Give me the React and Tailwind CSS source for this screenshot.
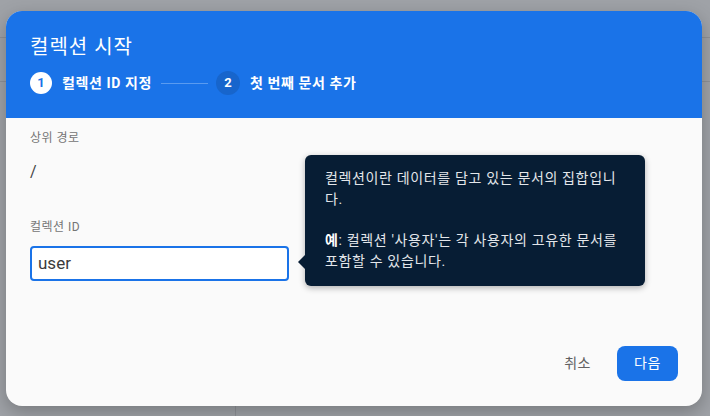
import React from 'react';

const font = { fontFamily: '"Roboto", "Noto Sans CJK KR", sans-serif' };

function Backdrop() {
  return (
    <div className="absolute inset-0 bg-[#9fa2a7]">
      <div className="h-[38px] border-b border-[#8e9196]" />
      <div className="h-[44px] border-b border-[#8e9196]" />
      <div className="flex h-[334px]">
        <div className="w-[236px] border-r border-[#8e9196]" />
        <div className="flex-1" />
      </div>
    </div>
  );
}

function Step({ n, label, active }) {
  return (
    <div className="flex items-center gap-[10px]">
      <div
        className={
          active
            ? 'w-[22px] h-[22px] rounded-full bg-white text-[#1a73e8] flex items-center justify-center text-[13px] font-bold'
            : 'w-[24px] h-[24px] rounded-full bg-[#1765cc] text-white flex items-center justify-center text-[13px] font-bold'
        }
      >
        {n}
      </div>
      <span className="text-white text-[14px] font-bold tracking-[0.6px]">{label}</span>
    </div>
  );
}

export default function App() {
  return (
    <div className="relative w-[710px] h-[416px] overflow-hidden" style={font}>
      <Backdrop />
      <div className="absolute left-[6px] top-[11px] w-[696px] h-[395px] rounded-[16px] overflow-hidden bg-[#fafafa] shadow-[0_6px_18px_rgba(0,0,0,0.25)] flex flex-col">
        <div className="h-[107px] bg-[#1a73e8] px-6 pt-[22px]">
          <h1 className="text-white text-[20px] leading-[28px] font-normal tracking-[1px]">컬렉션 시작</h1>
          <div className="mt-[10px] h-6 flex items-center">
            <Step n="1" label="컬렉션 ID 지정" active />
            <div className="w-[47px] h-px bg-[#5a9bf0] ml-[9px] mr-[8px]" />
            <Step n="2" label="첫 번째 문서 추가" />
          </div>
        </div>

        <div className="relative flex-1 px-6 pt-3 tracking-[0.5px]">
          <div className="text-[12px] leading-4 text-[#757575]">상위 경로</div>
          <div className="mt-[14px] text-[16px] leading-6 text-[#444]">/</div>
          <div className="mt-[35px] text-[12px] leading-4 text-[#757575]">컬렉션 ID</div>
          <div className="mt-[11px] w-[259px] h-[35px] rounded-[4px] border-2 border-[#1a73e8] bg-white flex items-center px-[6px] text-[17px] font-normal tracking-normal text-[#3c3c3c]">
            user
          </div>

          <div className="absolute left-[299px] top-[37px] w-[340px] h-[131px] rounded-[6px] bg-[#071d34] shadow-[0_2px_6px_rgba(0,0,0,0.3)] px-5 pt-[13px] text-[14px] leading-[21px] tracking-[0.65px] text-[#e3e6ea]">
            <div className="absolute -left-[7px] top-[100px] w-0 h-0 border-y-[7px] border-y-transparent border-r-[7px] border-r-[#071d34]" />
            <div className="whitespace-nowrap">컬렉션이란 데이터를 담고 있는 문서의 집합입니</div>
            <div>다.</div>
            <div className="h-[20px]" />
            <div className="whitespace-nowrap">
              <span className="font-bold text-white">예</span>: 컬렉션 '사용자'는 각 사용자의 고유한 문서를
            </div>
            <div>포함할 수 있습니다.</div>
          </div>

          <div className="absolute right-6 bottom-[25px] flex items-center gap-[10px]">
            <button className="px-4 h-[35px] text-[14px] text-[#616161]">취소</button>
            <button className="w-[61px] h-[35px] rounded-[8px] bg-[#1a73e8] text-white text-[14px]">다음</button>
          </div>
        </div>
      </div>
    </div>
  );
}
